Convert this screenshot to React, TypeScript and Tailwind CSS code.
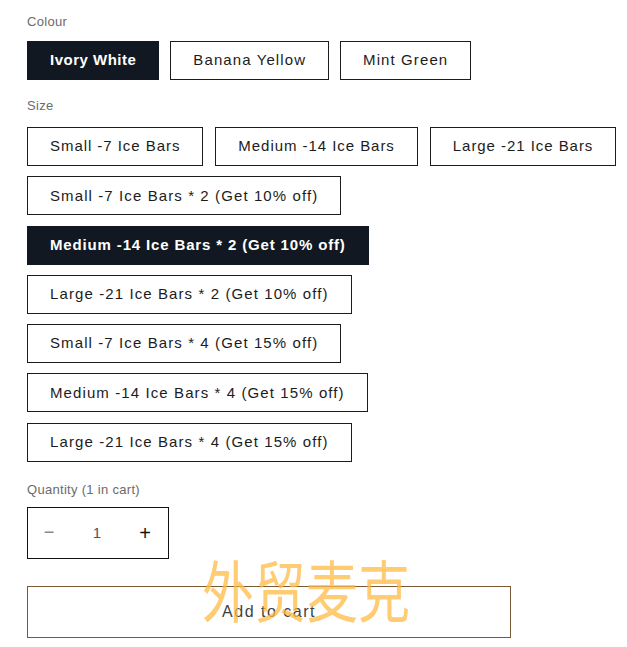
import React from "react";

const colours = ["Ivory White", "Banana Yellow", "Mint Green"];
const sizesRow = ["Small -7 Ice Bars", "Medium -14 Ice Bars", "Large -21 Ice Bars"];
const sizes = [
  "Small -7 Ice Bars * 2 (Get 10% off)",
  "Medium -14 Ice Bars * 2 (Get 10% off)",
  "Large -21 Ice Bars * 2 (Get 10% off)",
  "Small -7 Ice Bars * 4 (Get 15% off)",
  "Medium -14 Ice Bars * 4 (Get 15% off)",
  "Large -21 Ice Bars * 4 (Get 15% off)",
];

function Pill({ label, active, track }: { label: string; active?: boolean; track: string }) {
  return (
    <div
      className={
        "h-[39px] flex items-center px-[22px] border text-[15px] " +
        track +
        " " +
        (active
          ? "bg-[#121821] border-[#121821] text-white font-bold"
          : "bg-white border-[#1c1c1c] text-[#1c1c1c]")
      }
    >
      {label}
    </div>
  );
}

export default function App() {
  return (
    <div
      className="relative w-[627px] h-[647px] bg-white overflow-hidden"
      style={{ fontFamily: '"Liberation Sans", Arial, sans-serif' }}
    >
      <div className="pl-[27px] pt-[12px]">
        <div className="text-[13px] text-[#6b6b6b] tracking-[0.3px] h-[20px]">Colour</div>
        <div className="flex gap-[11px] mt-[9px]">
          {colours.map((c, i) => (
            <Pill
              key={c}
              label={c}
              active={i === 0}
              track={i === 0 ? "tracking-[0.5px]" : "tracking-[1.1px]"}
            />
          ))}
        </div>
        <div className="text-[13px] text-[#6b6b6b] tracking-[0.3px] h-[20px] mt-[16px]">Size</div>
        <div className="flex flex-col gap-[10.3px] mt-[11px] items-start">
          <div className="flex gap-[12px]">
            {sizesRow.map((s) => (
              <Pill key={s} label={s} track="tracking-[0.95px]" />
            ))}
          </div>
          {sizes.map((s, i) => (
            <Pill
              key={s}
              label={s}
              active={i === 1}
              track={i === 1 ? "tracking-[0.85px]" : "tracking-[1.1px]"}
            />
          ))}
        </div>
        <div className="text-[13px] text-[#6b6b6b] tracking-[0.3px] h-[20px] mt-[18px]">
          Quantity (1 in cart)
        </div>
        <div className="mt-[7px] w-[142px] h-[52px] border border-[#121212] flex items-center justify-between pl-[14px] pr-[16px] text-[15px]">
          <span className="text-[#8a8a8a] text-[18px] w-[14px] text-center">−</span>
          <span className="text-[#555]">1</span>
          <span className="text-[#121212] text-[20px] w-[14px] text-center">+</span>
        </div>
        <div className="mt-[27px] w-[484px] h-[52px] border border-[#7a5a35] flex items-center justify-center text-[16px] tracking-[1.5px] text-[#3f3f3f]">
          Add to cart
        </div>
      </div>
      <div
        className="absolute left-[202px] top-[555px] text-[52px] leading-none text-[#ffbb45] opacity-75 pointer-events-none origin-top scale-y-[1.3]"
        style={{ fontFamily: '"Noto Sans CJK SC", sans-serif' }}
      >
        外贸麦克
      </div>
    </div>
  );
}
